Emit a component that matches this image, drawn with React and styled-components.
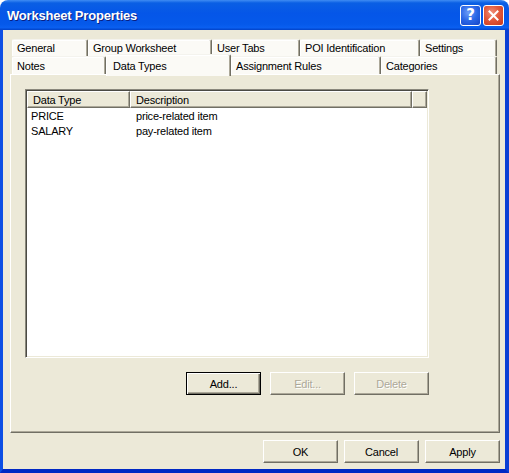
import React from 'react';
import styled, { createGlobalStyle } from 'styled-components';

const GlobalStyle = createGlobalStyle`
  html, body {
    margin: 0;
    padding: 0;
    background: #ffffff;
  }
  body {
    font-family: "Liberation Sans", Arial, sans-serif;
    font-size: 11px;
    letter-spacing: -0.2px;
  }
`;

const Window = styled.div`
  width: 509px;
  height: 473px;
  display: flex;
  flex-direction: column;
  border-radius: 8px 8px 0 0;
  overflow: hidden;
`;

const TitleBar = styled.div`
  height: 30px;
  flex: 0 0 30px;
  display: flex;
  align-items: center;
  justify-content: space-between;
  padding: 0 5px 0 7px;
  box-sizing: border-box;
  background: linear-gradient(
    to bottom,
    #3f8cf3 0%,
    #0a5fe4 10%,
    #0556e8 45%,
    #0559ea 80%,
    #0a5ff0 92%,
    #0142c8 100%
  );
`;

const Title = styled.span`
  color: #ffffff;
  font-weight: bold;
  font-size: 13px;
  letter-spacing: -0.2px;
  text-shadow: 1px 1px 0 #0a1f82;
  margin-top: 1px;
`;

const Controls = styled.div`
  display: flex;
  gap: 2px;
`;

const CaptionButton = styled.div`
  width: 21px;
  height: 21px;
  box-sizing: border-box;
  border: 1px solid #ffffff;
  border-radius: 3px;
  display: flex;
  align-items: center;
  justify-content: center;
  color: #ffffff;
  font-weight: bold;
  font-size: 15px;
  letter-spacing: 0;
  font-family: "DejaVu Sans", sans-serif;
  background: ${p =>
    p.$kind === 'close'
      ? 'radial-gradient(circle at 40% 35%, #f0907a 0%, #e2593c 45%, #c8381a 100%)'
      : 'radial-gradient(circle at 40% 35%, #6d9ef8 0%, #2a66e6 50%, #1444c6 100%)'};
`;

const Frame = styled.div`
  flex: 1;
  display: flex;
  flex-direction: column;
  background: #ece9d8;
  border-style: solid;
  border-width: 0 4px 4px 3px;
  border-color: #0a48dc #0a3fd4 #0028c4 #0c4ee4;
  padding: 9px 5px 0 7px;
`;

const TabStrip = styled.div`
  display: flex;
  flex-direction: column;
  margin: 0 3px 0 2px;
`;

const TabRow = styled.div`
  display: flex;
  height: ${p => p.$h}px;
  align-items: stretch;
`;

const Tab = styled.div`
  position: relative;
  box-sizing: border-box;
  flex: 0 0 auto;
  display: flex;
  align-items: center;
  padding-left: 4px;
  color: #000000;
  white-space: nowrap;
  background: #fbfaf6;
  border-style: solid;
  border-width: 1px 1px 0 1px;
  border-color: #f4f3ee #716f64 transparent #ffffff;
  box-shadow: inset -1px 0 0 #aca899, inset 0 1px 0 #ffffff;
  border-radius: 2px 2px 0 0;
  ${p =>
    p.$active &&
    `
    z-index: 2;
    margin-top: -2px;
    margin-bottom: -2px;
    padding-left: 6px;
  `}
`;

const Panel = styled.div`
  height: 359px;
  box-sizing: border-box;
  display: flex;
  flex-direction: column;
  padding: 14px 70px 0 14px;
  border-style: solid;
  border-width: 1px;
  border-color: #ffffff #716f64 #716f64 #ffffff;
  box-shadow: inset -1px -1px 0 #aca899;
`;

const ListView = styled.div`
  height: 269px;
  box-sizing: border-box;
  background: #ffffff;
  border-style: solid;
  border-width: 1px;
  border-color: #8a887c #ffffff #ffffff #8a887c;
  box-shadow: inset 1px 1px 0 #4b4a44, inset -1px -1px 0 #ece9d8;
  padding: 1px;
`;

const Header = styled.div`
  display: flex;
  height: 17px;
`;

const HeadCell = styled.div`
  box-sizing: border-box;
  flex: ${p => (p.$w ? `0 0 ${p.$w}px` : '1')};
  display: flex;
  align-items: center;
  padding-left: 5px;
  background: #ece9d8;
  border-style: solid;
  border-width: 1px;
  border-color: #ffffff #716f64 #716f64 #ffffff;
  box-shadow: inset -1px -1px 0 #aca899;
`;

const Row = styled.div`
  display: flex;
  height: 15px;
  align-items: center;
`;

const Cell = styled.div`
  flex: ${p => (p.$w ? `0 0 ${p.$w}px` : '1')};
  box-sizing: border-box;
  padding-left: ${p => p.$pad}px;
  white-space: nowrap;
`;

const ButtonRow = styled.div`
  display: flex;
  justify-content: flex-end;
  gap: 9px;
  margin-top: 14px;
`;

const Footer = styled.div`
  display: flex;
  justify-content: flex-end;
  gap: 6px;
  margin-top: 7px;
`;

const Button = styled.div`
  width: 75px;
  height: 23px;
  box-sizing: border-box;
  display: flex;
  align-items: center;
  justify-content: center;
  background: #ece9d8;
  color: ${p => (p.$disabled ? '#aca899' : '#000000')};
  text-shadow: ${p => (p.$disabled ? '1px 1px 0 #ffffff' : 'none')};
  border-style: solid;
  border-width: 1px;
  border-color: ${p =>
    p.$default ? '#000000' : '#ffffff #716f64 #716f64 #ffffff'};
  box-shadow: ${p =>
    p.$default
      ? 'inset 1px 1px 0 #ffffff, inset -1px -1px 0 #716f64, inset -2px -2px 0 #aca899'
      : 'inset -1px -1px 0 #aca899'};
`;

const topTabs = [
  ['General', 76],
  ['Group Worksheet', 124],
  ['User Tabs', 88],
  ['POI Identification', 120],
  ['Settings', 77],
];

const frontTabs = [
  ['Notes', 94],
  ['Data Types', 125, true],
  ['Assignment Rules', 150],
  ['Categories', 116],
];

const items = [
  ['PRICE', 'price-related item'],
  ['SALARY', 'pay-related item'],
];

const CloseIcon = () => (
  <svg width="11" height="11" viewBox="0 0 11 11">
    <path d="M1.5 1.5 L9.5 9.5 M9.5 1.5 L1.5 9.5" stroke="#fff" strokeWidth="2" strokeLinecap="square" />
  </svg>
);

export default function App() {
  return (
    <>
      <GlobalStyle />
      <Window>
        <TitleBar>
          <Title>Worksheet Properties</Title>
          <Controls>
            <CaptionButton $kind="help">?</CaptionButton>
            <CaptionButton $kind="close">
              <CloseIcon />
            </CaptionButton>
          </Controls>
        </TitleBar>
        <Frame>
          <TabStrip>
            <TabRow $h={17}>
              {topTabs.map(([label, w]) => (
                <Tab key={label} style={{ width: w }}>
                  {label}
                </Tab>
              ))}
            </TabRow>
            <TabRow $h={18}>
              {frontTabs.map(([label, w, active]) => (
                <Tab key={label} $active={active} style={{ width: w }}>
                  {label}
                </Tab>
              ))}
            </TabRow>
          </TabStrip>
          <Panel>
            <ListView>
              <Header>
                <HeadCell $w={103}>Data Type</HeadCell>
                <HeadCell $w={282}>Description</HeadCell>
                <HeadCell />
              </Header>
              {items.map(([type, desc]) => (
                <Row key={type}>
                  <Cell $w={103} $pad={4}>{type}</Cell>
                  <Cell $pad={6}>{desc}</Cell>
                </Row>
              ))}
            </ListView>
            <ButtonRow>
              <Button $default>Add...</Button>
              <Button $disabled>Edit...</Button>
              <Button $disabled>Delete</Button>
            </ButtonRow>
          </Panel>
          <Footer>
            <Button>OK</Button>
            <Button>Cancel</Button>
            <Button>Apply</Button>
          </Footer>
        </Frame>
      </Window>
    </>
  );
}
